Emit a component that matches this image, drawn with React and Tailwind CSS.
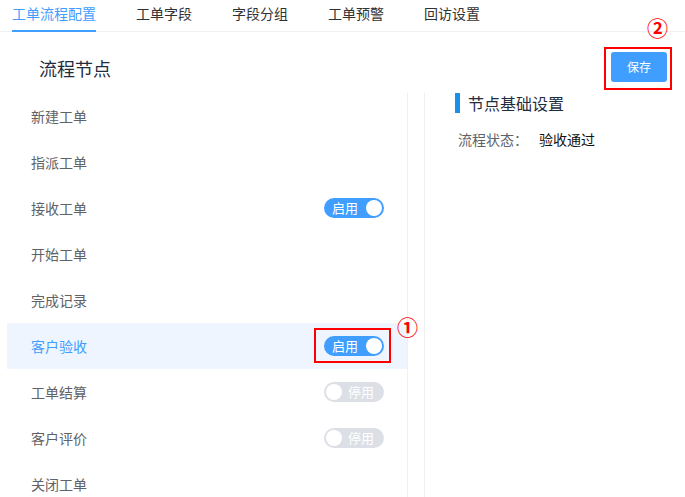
import React from "react";

const tabs = ["工单流程配置", "工单字段", "字段分组", "工单预警", "回访设置"];

const nodes = [
  { name: "新建工单" },
  { name: "指派工单" },
  { name: "接收工单", toggle: "on" },
  { name: "开始工单" },
  { name: "完成记录" },
  { name: "客户验收", toggle: "on", active: true, mark: true },
  { name: "工单结算", toggle: "off" },
  { name: "客户评价", toggle: "off" },
  { name: "关闭工单" },
];

function Toggle({ on }) {
  if (on) {
    return (
      <div className="flex h-[20px] w-[60px] items-center justify-between rounded-full bg-[#409eff] pl-[8px] pr-[2px]">
        <span className="text-[13px] leading-[20px] text-white">启用</span>
        <span className="h-[16px] w-[16px] rounded-full bg-white"></span>
      </div>
    );
  }
  return (
    <div className="flex h-[20px] w-[60px] items-center justify-between rounded-full bg-[#dcdfe6] pl-[2px] pr-[10px]">
      <span className="h-[16px] w-[16px] rounded-full bg-white"></span>
      <span className="text-[13px] leading-[20px] text-white">停用</span>
    </div>
  );
}

export default function App() {
  return (
    <div
      className="flex h-[497px] w-[685px] flex-col overflow-hidden bg-white"
      style={{ fontFamily: '"Noto Sans CJK SC", "Noto Sans", sans-serif' }}
    >
      {/* tabs */}
      <div className="flex shrink-0 gap-[40px] border-b border-[#eeeff2] pl-[12px]">
        {tabs.map((t, i) => (
          <div
            key={t}
            className={
              i === 0
                ? "-mb-px h-[32px] border-b-2 border-[#409eff] text-[14px] leading-[26px] text-[#409eff]"
                : "-mb-px h-[32px] text-[14px] leading-[26px] text-[#303133]"
            }
          >
            {t}
          </div>
        ))}
      </div>

      {/* header */}
      <div className="flex h-[61px] shrink-0 items-start justify-between pl-[39px] pr-[18px] pt-[20px]">
        <div className="mt-[4px] text-[18px] leading-[24px] text-[#1f2d3d]">流程节点</div>
        <div className="relative">
          <button className="h-[30px] w-[56px] rounded-[3px] bg-[#409eff] text-[12px] text-white">保存</button>
          <div className="absolute -bottom-[8px] -left-[7px] -right-[5px] -top-[5px] border-2 border-[#ff0000]"></div>
          <span className="absolute left-[36px] top-[-38px] text-[21px] font-bold leading-[26px] text-[#ff0000]">②</span>
        </div>
      </div>

      {/* body */}
      <div className="flex min-h-0 flex-1">
        <div className="ml-[7px] w-[401px] shrink-0 border-r border-[#f0f0f2]">
          {nodes.map((n) => (
            <div
              key={n.name}
              className={
                n.active
                  ? "flex h-[46px] items-center justify-between bg-[#eef5fe] pl-[24px] pr-[23px]"
                  : "flex h-[46px] items-center justify-between pl-[24px] pr-[23px]"
              }
            >
              <span className={n.active ? "text-[14px] text-[#409eff]" : "text-[14px] text-[#606266]"}>{n.name}</span>
              {n.toggle && (
                <div className="relative">
                  <Toggle on={n.toggle === "on"} />
                  {n.mark && (
                    <>
                      <div className="absolute -bottom-[7px] -left-[10px] -right-[7px] -top-[8px] border-2 border-[#ff0000]"></div>
                      <span className="absolute left-[73px] top-[-23px] text-[21px] font-bold leading-[26px] text-[#ff0000]">①</span>
                    </>
                  )}
                </div>
              )}
            </div>
          ))}
        </div>

        <div className="ml-[16px] flex-1 border-l border-[#f0f0f2] pl-[30px]">
          <div className="flex h-[20px] items-center">
            <span className="h-[20px] w-[5px] bg-[#1a8fe8]"></span>
            <span className="ml-[8px] text-[16px] leading-[20px] text-[#1f2d3d]">节点基础设置</span>
          </div>
          <div className="mt-[16px] flex pl-[3px] text-[14px] leading-[20px]">
            <span className="w-[81px] text-[#606266]">流程状态：</span>
            <span className="text-[#111111]">验收通过</span>
          </div>
        </div>
      </div>
    </div>
  );
}
